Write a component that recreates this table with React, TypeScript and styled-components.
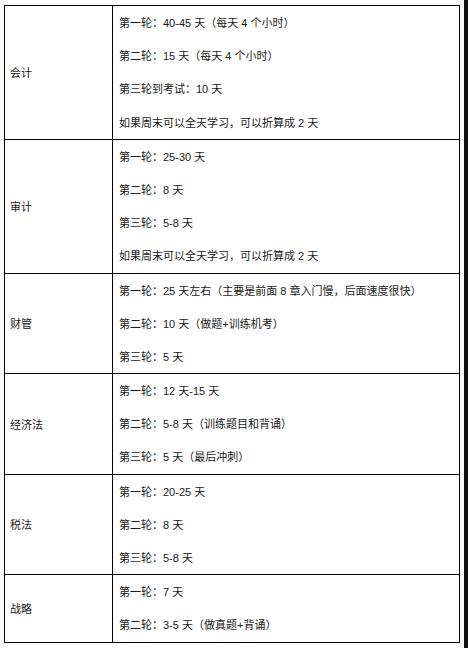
import styled, { createGlobalStyle } from "styled-components";

const GlobalStyle = createGlobalStyle`
    html, body {
        margin: 0;
        padding: 0;
        background: #fff;
    }
    body {
        font-family: "Liberation Sans", "Noto Sans CJK SC", sans-serif;
        color: #1a1a1a;
    }
`;

const Page = styled.div`
    width: 468px;
    height: 648px;
    display: flex;
    justify-content: space-between;
    align-items: flex-start;
    box-sizing: border-box;
    padding: 5px 0 0 4px;
    overflow: hidden;
`;

const EdgeBar = styled.div`
    width: 4px;
    height: 648px;
    margin-top: -5px;
    background: #111;
`;

const PlanTable = styled.table`
    width: 456px;
    border-collapse: collapse;
    table-layout: fixed;
    font-size: 11px;
    td {
        border: 1px solid #000;
        padding: 0;
    }
`;

const SubjectCell = styled.td`
    width: 108px;
    padding-left: 5px !important;
    vertical-align: middle;
`;

const StepsCell = styled.td`
    padding-left: 6px !important;
    vertical-align: top;
`;

const Step = styled.div`
    height: 33.2px;
    line-height: 33.2px;
    white-space: nowrap;
    padding-top: 1px;
    box-sizing: border-box;
`;

const plan: { subject: string; steps: string[] }[] = [
    {
        subject: "会计",
        steps: [
            "第一轮：40-45 天（每天 4 个小时）",
            "第二轮：15 天（每天 4 个小时）",
            "第三轮到考试：10 天",
            "如果周末可以全天学习，可以折算成 2 天",
        ],
    },
    {
        subject: "审计",
        steps: [
            "第一轮：25-30 天",
            "第二轮：8 天",
            "第三轮：5-8 天",
            "如果周末可以全天学习，可以折算成 2 天",
        ],
    },
    {
        subject: "财管",
        steps: [
            "第一轮：25 天左右（主要是前面 8 章入门慢，后面速度很快）",
            "第二轮：10 天（做题+训练机考）",
            "第三轮：5 天",
        ],
    },
    {
        subject: "经济法",
        steps: [
            "第一轮：12 天-15 天",
            "第二轮：5-8 天（训练题目和背诵）",
            "第三轮：5 天（最后冲刺）",
        ],
    },
    {
        subject: "税法",
        steps: ["第一轮：20-25 天", "第二轮：8 天", "第三轮：5-8 天"],
    },
    {
        subject: "战略",
        steps: ["第一轮：7 天", "第二轮：3-5 天（做真题+背诵）"],
    },
];

const App = () => {
    return (
        <>
            <GlobalStyle />
            <Page>
                <PlanTable>
                    <colgroup>
                        <col style={{ width: 108 }} />
                        <col />
                    </colgroup>
                    <tbody>
                        {plan.map((row) => (
                            <tr key={row.subject}>
                                <SubjectCell>{row.subject}</SubjectCell>
                                <StepsCell>
                                    {row.steps.map((s) => (
                                        <Step key={s}>{s}</Step>
                                    ))}
                                </StepsCell>
                            </tr>
                        ))}
                    </tbody>
                </PlanTable>
                <EdgeBar />
            </Page>
        </>
    );
};

export default App;
